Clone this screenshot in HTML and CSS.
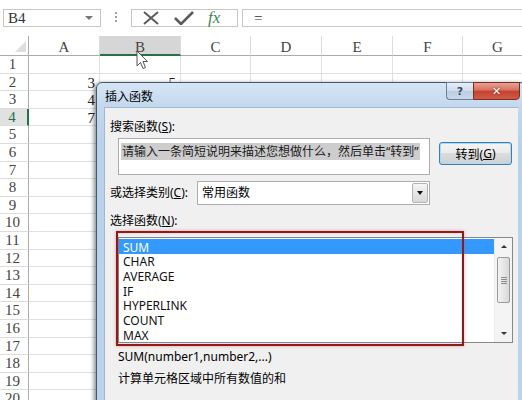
FILE: index.html
```html
<!DOCTYPE html>
<html lang="zh-CN">
<head>
<meta charset="utf-8">
<title>插入函数</title>
<link rel="stylesheet" href="styles.css">
</head>
<body>
<div class="app">
  <div class="formula-bar">
    <div class="namebox"><span>B4</span><span class="nb-arrow"></span></div>
    <div class="dots"><i></i><i></i><i></i></div>
    <div class="fx-buttons">
      <svg class="ic-x" width="16" height="14" viewBox="0 0 16 14"><path d="M1 1 L15 13 M15 1 L1 13" stroke="#5a5a5a" stroke-width="2" fill="none"/></svg>
      <svg class="ic-ok" width="20" height="14" viewBox="0 0 20 14"><path d="M1 7 L7 13 L19 1" stroke="#5a5a5a" stroke-width="2.6" fill="none"/></svg>
      <span class="fx">fx</span>
    </div>
    <div class="formula">=</div>
  </div>

  <div class="sheet">
    <div class="h corner"><span class="tri"></span></div>
    <div class="h">A</div><div class="h sel-col">B</div><div class="h">C</div><div class="h">D</div><div class="h">E</div><div class="h">F</div><div class="h">G</div>

    <div class="r">1</div><div class="c"></div><div class="c"></div><div class="c"></div><div class="c"></div><div class="c"></div><div class="c"></div><div class="c"></div>
    <div class="r">2</div><div class="c num">3</div><div class="c num">5</div><div class="c"></div><div class="c"></div><div class="c"></div><div class="c"></div><div class="c"></div>
    <div class="r">3</div><div class="c num">4</div><div class="c"></div><div class="c"></div><div class="c"></div><div class="c"></div><div class="c"></div><div class="c"></div>
    <div class="r sel-row">4</div><div class="c num">7</div><div class="c"></div><div class="c"></div><div class="c"></div><div class="c"></div><div class="c"></div><div class="c"></div>
    <div class="r">5</div><div class="c"></div><div class="c"></div><div class="c"></div><div class="c"></div><div class="c"></div><div class="c"></div><div class="c"></div>
    <div class="r">6</div><div class="c"></div><div class="c"></div><div class="c"></div><div class="c"></div><div class="c"></div><div class="c"></div><div class="c"></div>
    <div class="r">7</div><div class="c"></div><div class="c"></div><div class="c"></div><div class="c"></div><div class="c"></div><div class="c"></div><div class="c"></div>
    <div class="r">8</div><div class="c"></div><div class="c"></div><div class="c"></div><div class="c"></div><div class="c"></div><div class="c"></div><div class="c"></div>
    <div class="r">9</div><div class="c"></div><div class="c"></div><div class="c"></div><div class="c"></div><div class="c"></div><div class="c"></div><div class="c"></div>
    <div class="r">10</div><div class="c"></div><div class="c"></div><div class="c"></div><div class="c"></div><div class="c"></div><div class="c"></div><div class="c"></div>
    <div class="r">11</div><div class="c"></div><div class="c"></div><div class="c"></div><div class="c"></div><div class="c"></div><div class="c"></div><div class="c"></div>
    <div class="r">12</div><div class="c"></div><div class="c"></div><div class="c"></div><div class="c"></div><div class="c"></div><div class="c"></div><div class="c"></div>
    <div class="r">13</div><div class="c"></div><div class="c"></div><div class="c"></div><div class="c"></div><div class="c"></div><div class="c"></div><div class="c"></div>
    <div class="r">14</div><div class="c"></div><div class="c"></div><div class="c"></div><div class="c"></div><div class="c"></div><div class="c"></div><div class="c"></div>
    <div class="r">15</div><div class="c"></div><div class="c"></div><div class="c"></div><div class="c"></div><div class="c"></div><div class="c"></div><div class="c"></div>
    <div class="r">16</div><div class="c"></div><div class="c"></div><div class="c"></div><div class="c"></div><div class="c"></div><div class="c"></div><div class="c"></div>
    <div class="r">17</div><div class="c"></div><div class="c"></div><div class="c"></div><div class="c"></div><div class="c"></div><div class="c"></div><div class="c"></div>
    <div class="r">18</div><div class="c"></div><div class="c"></div><div class="c"></div><div class="c"></div><div class="c"></div><div class="c"></div><div class="c"></div>
    <div class="r">19</div><div class="c"></div><div class="c"></div><div class="c"></div><div class="c"></div><div class="c"></div><div class="c"></div><div class="c"></div>
    <div class="r">20</div><div class="c"></div><div class="c"></div><div class="c"></div><div class="c"></div><div class="c"></div><div class="c"></div><div class="c"></div>
  </div>

  <svg class="cursor" width="13" height="20" viewBox="0 0 13 20"><path d="M1 1 L1 16 L4.5 12.5 L7 18.5 L9.5 17.5 L7 11.5 L11.5 11.5 Z" fill="#fff" stroke="#555" stroke-width="1"/></svg>

  <div class="dialog">
    <div class="titlebar">
      <span class="title">插入函数</span>
      <div class="tb-buttons">
        <span class="btn-help">?</span>
        <span class="btn-close">✕</span>
      </div>
    </div>
    <div class="client">
      <div class="label first">搜索函数(<u>S</u>):</div>
      <div class="search-row">
        <div class="search-box"><span class="selected-text">请输入一条简短说明来描述您想做什么，然后单击“转到”</span></div>
        <div class="go-btn">转到(<u>G</u>)</div>
      </div>
      <div class="cat-row">
        <div class="cat-label">或选择类别(<u>C</u>):</div>
        <div class="select"><span class="select-text">常用函数</span><span class="select-btn"><span class="down"></span></span></div>
      </div>
      <div class="label third">选择函数(<u>N</u>):</div>
      <div class="listbox">
        <div class="items">
          <div class="item active">SUM</div>
          <div class="item">CHAR</div>
          <div class="item">AVERAGE</div>
          <div class="item">IF</div>
          <div class="item">HYPERLINK</div>
          <div class="item">COUNT</div>
          <div class="item">MAX</div>
        </div>
        <div class="scrollbar">
          <span class="sb-up"></span>
          <span class="thumb"><i></i><i></i><i></i><i></i></span>
          <span class="sb-space"></span>
          <span class="sb-down"></span>
        </div>
      </div>
      <div class="syntax">SUM(number1,number2,...)</div>
      <div class="desc">计算单元格区域中所有数值的和</div>
    </div>
  </div>

  <div class="red-box"></div>
</div>
</body>
</html>
```

FILE: styles.css
```css
html, body {
  margin: 0;
  padding: 0;
  background: #fff;
}

.app {
  position: relative;
  width: 522px;
  height: 400px;
  overflow: hidden;
  font-family: "Liberation Serif", serif;
}

/* ---------- formula bar ---------- */
.formula-bar {
  height: 36px;
  box-sizing: border-box;
  padding-top: 9px;
  display: flex;
  align-items: flex-start;
}

.namebox {
  margin-left: 3px;
  width: 98px;
  height: 18px;
  box-sizing: border-box;
  border: 1px solid #c6c6c6;
  display: flex;
  align-items: center;
  justify-content: space-between;
  padding: 0 7px 0 4px;
  font-size: 15px;
  color: #333;
}

.nb-arrow {
  width: 0;
  height: 0;
  border-left: 4px solid transparent;
  border-right: 4px solid transparent;
  border-top: 4px solid #777;
}

.dots {
  margin-left: 14px;
  margin-top: 3px;
  display: flex;
  flex-direction: column;
  gap: 2px;
}

.dots i {
  display: block;
  width: 2px;
  height: 2px;
  background: #a0a0a0;
}

.fx-buttons {
  margin-left: 14px;
  width: 107px;
  height: 18px;
  box-sizing: border-box;
  border: 1px solid #c6c6c6;
  display: flex;
  align-items: center;
}

.ic-x { margin-left: 11px; }
.ic-ok { margin-left: 15px; }

.fx {
  margin-left: 14px;
  font-family: "Liberation Serif", serif;
  font-style: italic;
  font-size: 17px;
  color: #3a8a55;
  line-height: 16px;
}

.formula {
  margin-left: 4px;
  flex: 1;
  height: 18px;
  box-sizing: border-box;
  border: 1px solid #c6c6c6;
  border-right: none;
  padding-left: 11px;
  font-size: 15px;
  line-height: 16px;
  color: #333;
}

/* ---------- sheet ---------- */
.sheet {
  display: grid;
  grid-template-columns: 29px 71px 81px 70px 71px 71px 70px 70px;
  grid-template-rows: 20px repeat(20, 17.6px);
  font-size: 15px;
  color: #444;
}

.sheet > div {
  box-sizing: border-box;
}

.h {
  border-right: 1px solid #dcdcdc;
  border-bottom: 1px solid #ababab;
  text-align: center;
  line-height: 20px;
  padding-top: 1px;
}

.corner {
  display: flex;
  align-items: flex-end;
  justify-content: flex-end;
  padding: 0 2px 3px 0;
  border-right: 1px solid #ababab;
}

.tri {
  width: 0;
  height: 0;
  border-left: 11px solid transparent;
  border-bottom: 11px solid #dedede;
}

.sel-col {
  background: #d6d6d6;
  border-bottom: 2px solid #217346;
}

.r {
  border-right: 1px solid #ababab;
  border-bottom: 1px solid #dcdcdc;
  text-align: center;
  padding-right: 3px;
  line-height: 17px;
}

.sel-row {
  background: #e1e1e1;
  color: #217346;
  border-right: 2px solid #217346;
}

.c {
  border-right: 1px solid #e0e0e0;
  border-bottom: 1px solid #e0e0e0;
}

.num {
  text-align: right;
  padding-right: 4px;
  line-height: 18px;
  color: #222;
}

/* ---------- cursor ---------- */
.cursor {
  position: absolute;
  left: 136px;
  top: 50px;
}

/* ---------- dialog ---------- */
.dialog {
  position: absolute;
  left: 96px;
  top: 82px;
  width: 430px;
  height: 330px;
  box-sizing: border-box;
  border: 1px solid #44566b;
  border-radius: 6px 6px 0 0;
  background: linear-gradient(180deg, #d6e5f5 0px, #c3d8ee 24px, #b9d1ea 60px, #bcd3eb 100%);
  box-shadow: -2px 1px 4px rgba(0, 0, 0, 0.45);
  display: flex;
  flex-direction: column;
  font-family: "Noto Sans", "Noto Sans CJK SC", sans-serif;
  font-size: 12px;
  color: #000;
}

.titlebar {
  height: 24px;
  display: flex;
  justify-content: space-between;
  align-items: flex-start;
  padding: 0 5px 0 8px;
}

.title {
  line-height: 25px;
  font-family: "Noto Sans CJK SC", sans-serif;
  font-size: 12px;
}

.tb-buttons {
  display: flex;
  margin-top: -1px;
}

.btn-help,
.btn-close {
  height: 18px;
  box-sizing: border-box;
  display: flex;
  align-items: center;
  justify-content: center;
}

.btn-help {
  width: 27px;
  border: 1px solid #6b7f96;
  border-right: none;
  border-radius: 0 0 0 4px;
  background: linear-gradient(180deg, #e6eef8 0%, #cfdced 50%, #bccde2 51%, #c9d8ea 100%);
  color: #3c4b5e;
  font-family: "DejaVu Sans", sans-serif;
  font-size: 11px;
  font-weight: bold;
}

.btn-close {
  width: 47px;
  border: 1px solid #7d2c23;
  border-radius: 0 0 4px 0;
  background: linear-gradient(180deg, #e8a294 0%, #d7705f 45%, #c3432f 50%, #d15a44 100%);
  color: #fff;
  font-family: "DejaVu Sans", sans-serif;
  font-size: 11px;
  font-weight: bold;
  text-shadow: 0 0 2px #6d1e14;
}

.client {
  flex: 1;
  margin: 0 7px;
  background: #f0f0f0;
  border-top: 1px solid #a4b8cd;
  border-left: 1px solid #a4b8cd;
  display: flex;
  flex-direction: column;
  align-items: flex-start;
}

.label {
  padding-left: 5px;
  line-height: 16px;
  height: 16px;
}

.first { margin-top: 11px; }

.search-row {
  margin-top: 3px;
  display: flex;
  align-items: flex-start;
}

.search-box {
  margin-left: 13px;
  width: 312px;
  height: 37px;
  box-sizing: border-box;
  border: 1px solid #abadb3;
  background: #fff;
  padding: 5px 0 0 2px;
  line-height: 16px;
  white-space: nowrap;
  overflow: hidden;
}

.selected-text {
  background: #cdcdcd;
  color: #1a1a1a;
  padding: 0 1px;
}

.go-btn {
  margin-left: 9px;
  margin-top: 4px;
  width: 73px;
  height: 23px;
  box-sizing: border-box;
  border: 1px solid #3c7fb1;
  border-radius: 3px;
  background: linear-gradient(180deg, #f4f4f4 0%, #ececec 45%, #dcdcdc 50%, #d0d0d0 100%);
  box-shadow: inset 0 0 0 1px #a6dcf9;
  display: flex;
  align-items: center;
  justify-content: center;
}

.cat-row {
  margin-top: 6px;
  display: flex;
  align-items: center;
  padding-left: 5px;
}

.cat-label {
  width: 87px;
  line-height: 16px;
}

.select {
  width: 233px;
  height: 24px;
  box-sizing: border-box;
  border: 1px solid #abadb3;
  background: #fff;
  display: flex;
  justify-content: space-between;
  align-items: stretch;
}

.select-text {
  padding-left: 4px;
  line-height: 22px;
}

.select-btn {
  width: 16px;
  margin: 1px;
  box-sizing: border-box;
  border: 1px solid #b4b4b4;
  border-radius: 2px;
  background: linear-gradient(180deg, #f6f6f6 0%, #e6e6e6 50%, #d9d9d9 100%);
  display: flex;
  align-items: center;
  justify-content: center;
}

.down {
  width: 0;
  height: 0;
  border-left: 3.5px solid transparent;
  border-right: 3.5px solid transparent;
  border-top: 4px solid #111;
}

.third { margin-top: 8px; }

.listbox {
  margin-top: 8px;
  margin-left: 13px;
  width: 395px;
  height: 106px;
  box-sizing: border-box;
  border: 1px solid #828790;
  background: #fff;
  display: flex;
}

.items {
  flex: 1;
  padding-top: 1px;
}

.item {
  height: 14.7px;
  box-sizing: border-box;
  padding: 1.5px 0 0 4px;
  line-height: 13.2px;
  color: #111;
}

.item.active {
  background: #3399ff;
  color: #fff;
}

.scrollbar {
  width: 17px;
  background: #f4f4f4;
  border-left: 1px solid #ececec;
  display: flex;
  flex-direction: column;
  align-items: center;
}

.sb-up,
.sb-down {
  height: 17px;
  display: flex;
  align-items: center;
  justify-content: center;
}

.sb-up::before {
  content: "";
  border-left: 3px solid transparent;
  border-right: 3px solid transparent;
  border-bottom: 3px solid #333;
}

.sb-down::before {
  content: "";
  border-left: 3px solid transparent;
  border-right: 3px solid transparent;
  border-top: 3px solid #333;
}

.thumb {
  margin-top: 2px;
  width: 13px;
  height: 46px;
  box-sizing: border-box;
  border: 1px solid #9a9a9a;
  border-radius: 2px;
  background: linear-gradient(90deg, #f3f3f3 0%, #e6e6e6 50%, #d8d8d8 100%);
  display: flex;
  flex-direction: column;
  align-items: center;
  justify-content: center;
  gap: 1px;
}

.thumb i {
  display: block;
  width: 6px;
  height: 1px;
  background: #8a8a8a;
}

.sb-space { flex: 1; }

.syntax {
  margin-top: 6px;
  margin-left: 13px;
  line-height: 16px;
}

.desc {
  margin-top: 5px;
  margin-left: 13px;
  line-height: 16px;
  font-family: "Noto Sans CJK SC", sans-serif;
}

/* ---------- annotation ---------- */
.red-box {
  position: absolute;
  left: 116px;
  top: 231px;
  width: 348px;
  height: 115px;
  box-sizing: border-box;
  border: 2px solid #8e1a1a;
  box-shadow: 0 0 3px rgba(200, 90, 90, 0.55), inset 0 0 2px rgba(200, 90, 90, 0.4);
}
```
